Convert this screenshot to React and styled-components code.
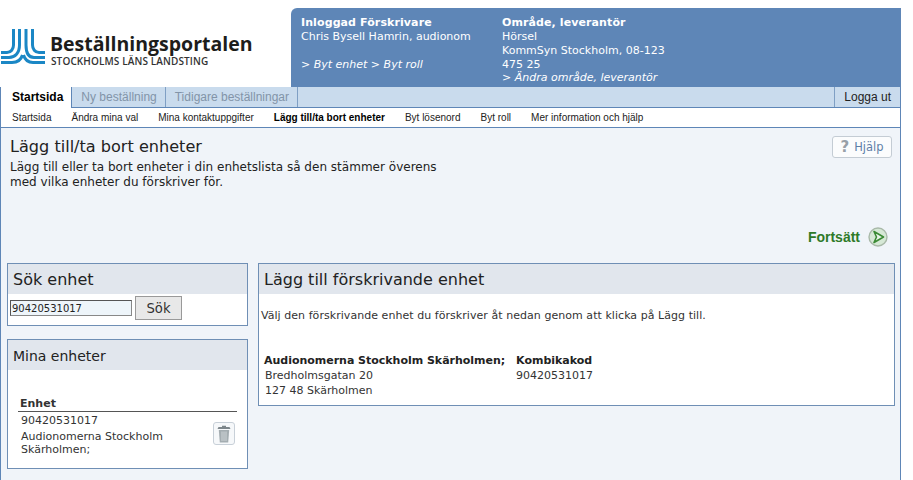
import React from "react";
import styled, { createGlobalStyle } from "styled-components";

const Global = createGlobalStyle`
  html, body { margin: 0; padding: 0; background: #fff; }
  body { font-family: "DejaVu Sans", Verdana, sans-serif; font-size: 11px; color: #222; }
`;
const Page = styled.div`width: 901px; height: 480px; overflow: hidden; display: flex; flex-direction: column;`;
const Header = styled.header`height: 87px; display: flex; justify-content: space-between; flex: none;`;
const LogoWrap = styled.div`display: flex; align-items: flex-start; padding: 29px 0 0 1px; gap: 5px;`;
const LogoText = styled.div`display: flex; flex-direction: column; padding-top: 5px; font-family: "Open Sans", sans-serif; color: #1d1d1b;`;
const LogoTitle = styled.div`font-size: 19.5px; font-weight: 700; line-height: 20px;`;
const LogoSub = styled.div`font-size: 10px; font-weight: 600; line-height: 11px; color: #333; letter-spacing: 0.12px; margin: 2px 0 0 1px;`;
const InfoPanel = styled.div`
  width: 610px; margin-top: 8px; background: #5e86b7; border-radius: 6px 0 0 0; color: #fff;
  display: flex; padding: 8px 0 0 10px; box-sizing: border-box; line-height: 14px; font-size: 11px;
`;
const InfoCol = styled.div`width: ${p => p.$w}px;`;
const InfoHead = styled.div`font-weight: 700; letter-spacing: 0.1px;`;
const InfoLink = styled.div`font-style: italic; margin-top: ${p => p.$mt || 0}px;`;
const TabBar = styled.nav`
  height: 20px; flex: none; background: #c9dbed; display: flex; border-left: 1px solid #5e86b7; border-right: 1px solid #5e86b7;
  border-bottom: 1px solid #5e86b7; font-family: "Liberation Sans", sans-serif; font-size: 12px;
`;
const Tab = styled.div`
  padding: 0 8px 0 9px; line-height: 20px; border-right: 1px solid #7f9fc4; color: #8294a8; background: transparent;
  &:first-child { color: #000; font-weight: 700; background: #fff; height: 21px; padding: 0 8px 0 11px; border-right-color: #5e86b7; }
`;
const Logout = styled.div`margin-left: auto; padding: 0 9px; line-height: 20px; border-left: 1px solid #7f9fc4; color: #222;`;
const SubNav = styled.nav`
  height: 19px; flex: none; background: #fff; display: flex; gap: 20px; padding-left: 11px;
  border-left: 1px solid #5e86b7; border-right: 1px solid #5e86b7; border-bottom: 1px solid #5e86b7;
  font-family: "Liberation Sans", sans-serif; font-size: 10px; line-height: 19px; color: #222;
`;
const SubLink = styled.span`font-weight: ${p => p.$active ? 700 : 400}; color: ${p => p.$active ? "#000" : "#222"};`;
const Content = styled.main`
  flex: 1; background: #f0f4f9; border-left: 1px solid #5e86b7; border-right: 1px solid #5e86b7;
  display: flex; flex-direction: column; padding: 0 5px 0 6px;
`;
const Intro = styled.section`height: 135px; flex: none; display: flex; flex-direction: column;`;
const TitleRow = styled.div`display: flex; justify-content: space-between; padding: 8px 3px 0 3px;`;
const PageTitle = styled.h1`margin: 0; font-size: 16.1px; font-weight: 400; line-height: 22px; color: #222;`;
const HelpBtn = styled.div`
  width: 60px; height: 22px; box-sizing: border-box; border: 1px solid #c4ccd4; border-radius: 3px; background: #fbfcfd;
  display: flex; align-items: center; justify-content: center; gap: 5px; color: #5e7fa8; font-size: 11.5px;
`;
const HelpMark = styled.span`font-weight: 700; color: #98a0a8; font-size: 15px; line-height: 16px; font-family: "DejaVu Sans", sans-serif;`;
const Desc = styled.p`margin: 0; padding: 2px 0 0 3px; font-size: 12px; line-height: 15px; width: 450px; color: #222; letter-spacing: 0.015px;`;
const Continue = styled.div`
  margin-top: auto; margin-bottom: 16px; align-self: flex-end; display: flex; align-items: center; gap: 8px; padding-right: 7px;
  font-family: "Liberation Sans", sans-serif; font-weight: 700; font-size: 14px; color: #2e7a28;
`;
const Columns = styled.div`display: flex; gap: 10px; align-items: flex-start;`;
const LeftCol = styled.div`width: 241px; flex: none; display: flex; flex-direction: column; gap: 13px;`;
const Box = styled.section`background: #fff; border: 1px solid #6f8fb5; box-sizing: border-box;`;
const RightBox = styled(Box)`width: 637px; height: 143px;`;
const BoxHead = styled.h2`
  margin: 0; height: 30px; background: #e1e6ed; padding-left: 5px; font-weight: 400;
  font-size: ${p => p.$size || 16}px; line-height: ${p => p.$size ? 32 : 31}px; color: #222;
`;
const SearchRow = styled.div`display: flex; align-items: center; gap: 3px; padding: 2px 0 5px 2px;`;
const Input = styled.input`
  width: 122px; height: 16px; box-sizing: border-box; border: 1px solid #555; background: #eef5fa; padding: 0 1px;
  font: 10px "DejaVu Sans", sans-serif; color: #222; outline: none; border-right-color:#888; border-bottom-color:#888;
`;
const SearchBtn = styled.button`
  width: 47px; height: 24px; border: 1px solid #999; background: #e8e8e8; padding: 0;
  font: 13.2px "DejaVu Sans", sans-serif; color: #333;
`;
const UnitBody = styled.div`padding: 27px 10px 0 10px; height: 98px; box-sizing: border-box; position: relative;`;
const UnitHead = styled.div`font-weight: 700; border-bottom: 1px solid #555; padding: 0 0 0 2px; line-height: 13px; height: 14px; color: #333;`;
const UnitText = styled.div`padding: 1px 0 0 3px; line-height: 15px; width: 170px; color:#333; span { display: block; line-height: 13px; margin-top: 2px; } `;
const TrashBtn = styled.div`
  position: absolute; right: 12px; top: 52px; width: 22px; height: 23px; box-sizing: border-box;
  border: 1px solid #c8d0d8; border-radius: 3px; background: #f6f8fa;
  display: flex; align-items: center; justify-content: center;
`;
const Lead = styled.p`margin: 0; padding: 14px 0 0 2px; line-height: 15px; color: #333; letter-spacing: 0.05px;`;
const AddrGrid = styled.div`display: flex; gap: 11px; padding: 30px 0 0 5px; line-height: 15px; color:#333;`;
const AddrCol = styled.div`display: flex; flex-direction: column;`;
const Bold = styled.strong`font-weight: 700; color:#222; letter-spacing: -0.02px;`;
const Line = styled.span`padding-left: ${p => p.$pl || 0}px;`;

const Logo = () => (
  <svg width="44" height="37" viewBox="0 0 44 37" aria-hidden="true" style={{ flex: "none" }}>
    <g fill="none" stroke="#1b87c5" strokeWidth="3">
      <path d="M0 23.5 H6 C10 23.5 12.5 20 12.5 16 V0" />
      <path d="M0 28.5 H8 C14 28.5 18.5 24 18.5 16 V0" />
      <path d="M0 33.5 H11 C16 33.5 20 31 21.5 26" />
      <path d="M44 23.5 H38 C34 23.5 31.5 20 31.5 16 V0" />
      <path d="M44 28.5 H33 C28 28.5 25 24 25 16 V0" />
      <path d="M44 33.5 H32 C27 33.5 24 31 22.5 26" />
    </g>
  </svg>
);
const Arrow = () => (
  <svg width="20" height="20" viewBox="0 0 20 20" aria-hidden="true">
    <circle cx="10" cy="10" r="9" fill="#d6e8d6" stroke="#a9b9a9" strokeWidth="1.4" />
    <path d="M6 4.5 L15.5 10 L6 15.5 L8.5 10 Z" fill="#e9f5e9" stroke="#3b8a35" strokeWidth="1.6" strokeLinejoin="round" />
  </svg>
);
const Trash = () => (
  <svg width="14" height="18" viewBox="0 0 14 18" aria-hidden="true">
    <path d="M0.5 4 H13.5 L12.5 2 H9 V0.8 H5 V2 H1.5 Z" fill="#7d868b" />
    <path d="M1.8 5 H12.2 L11.2 17.5 H2.8 Z" fill="#a4adb1" />
    <path d="M5 6.5 V16 M7 6.5 V16 M9 6.5 V16" stroke="#d4d9db" strokeWidth="0.9" />
  </svg>
);

export default function App() {
  return (
    <Page>
      <Global />
      <Header>
        <LogoWrap>
          <Logo />
          <LogoText>
            <LogoTitle>Beställningsportalen</LogoTitle>
            <LogoSub>STOCKHOLMS LÄNS LANDSTING</LogoSub>
          </LogoText>
        </LogoWrap>
        <InfoPanel>
          <InfoCol $w={201}>
            <InfoHead>Inloggad Förskrivare</InfoHead>
            <div>Chris Bysell Hamrin, audionom</div>
            <InfoLink $mt={14}>&gt; Byt enhet &gt; Byt roll</InfoLink>
          </InfoCol>
          <InfoCol $w={180}>
            <InfoHead>Område, leverantör</InfoHead>
            <div>Hörsel</div>
            <div>KommSyn Stockholm, 08-123 475 25</div>
            <InfoLink $mt={-1}>&gt; Ändra område, leverantör</InfoLink>
          </InfoCol>
        </InfoPanel>
      </Header>
      <TabBar>
        <Tab>Startsida</Tab>
        <Tab>Ny beställning</Tab>
        <Tab>Tidigare beställningar</Tab>
        <Logout>Logga ut</Logout>
      </TabBar>
      <SubNav>
        <SubLink>Startsida</SubLink>
        <SubLink>Ändra mina val</SubLink>
        <SubLink>Mina kontaktuppgifter</SubLink>
        <SubLink $active>Lägg till/ta bort enheter</SubLink>
        <SubLink>Byt lösenord</SubLink>
        <SubLink>Byt roll</SubLink>
        <SubLink>Mer information och hjälp</SubLink>
      </SubNav>
      <Content>
        <Intro>
          <TitleRow>
            <PageTitle>Lägg till/ta bort enheter</PageTitle>
            <HelpBtn><HelpMark>?</HelpMark>Hjälp</HelpBtn>
          </TitleRow>
          <Desc>Lägg till eller ta bort enheter i din enhetslista så den stämmer överens med vilka enheter du förskriver för.</Desc>
          <Continue>Fortsätt <Arrow /></Continue>
        </Intro>
        <Columns>
          <LeftCol>
            <Box>
              <BoxHead>Sök enhet</BoxHead>
              <SearchRow>
                <Input defaultValue="90420531017" />
                <SearchBtn>Sök</SearchBtn>
              </SearchRow>
            </Box>
            <Box>
              <BoxHead $size={14}>Mina enheter</BoxHead>
              <UnitBody>
                <UnitHead>Enhet</UnitHead>
                <UnitText>
                  90420531017
                  <span>Audionomerna Stockholm Skärholmen;</span>
                </UnitText>
                <TrashBtn><Trash /></TrashBtn>
              </UnitBody>
            </Box>
          </LeftCol>
          <RightBox>
            <BoxHead>Lägg till förskrivande enhet</BoxHead>
            <Lead>Välj den förskrivande enhet du förskriver åt nedan genom att klicka på Lägg till.</Lead>
            <AddrGrid>
              <AddrCol>
                <Bold>Audionomerna Stockholm Skärholmen;</Bold>
                <Line $pl={1}>Bredholmsgatan 20</Line>
                <Line $pl={1}>127 48 Skärholmen</Line>
              </AddrCol>
              <AddrCol>
                <Bold>Kombikakod</Bold>
                <span>90420531017</span>
              </AddrCol>
            </AddrGrid>
          </RightBox>
        </Columns>
      </Content>
    </Page>
  );
}
